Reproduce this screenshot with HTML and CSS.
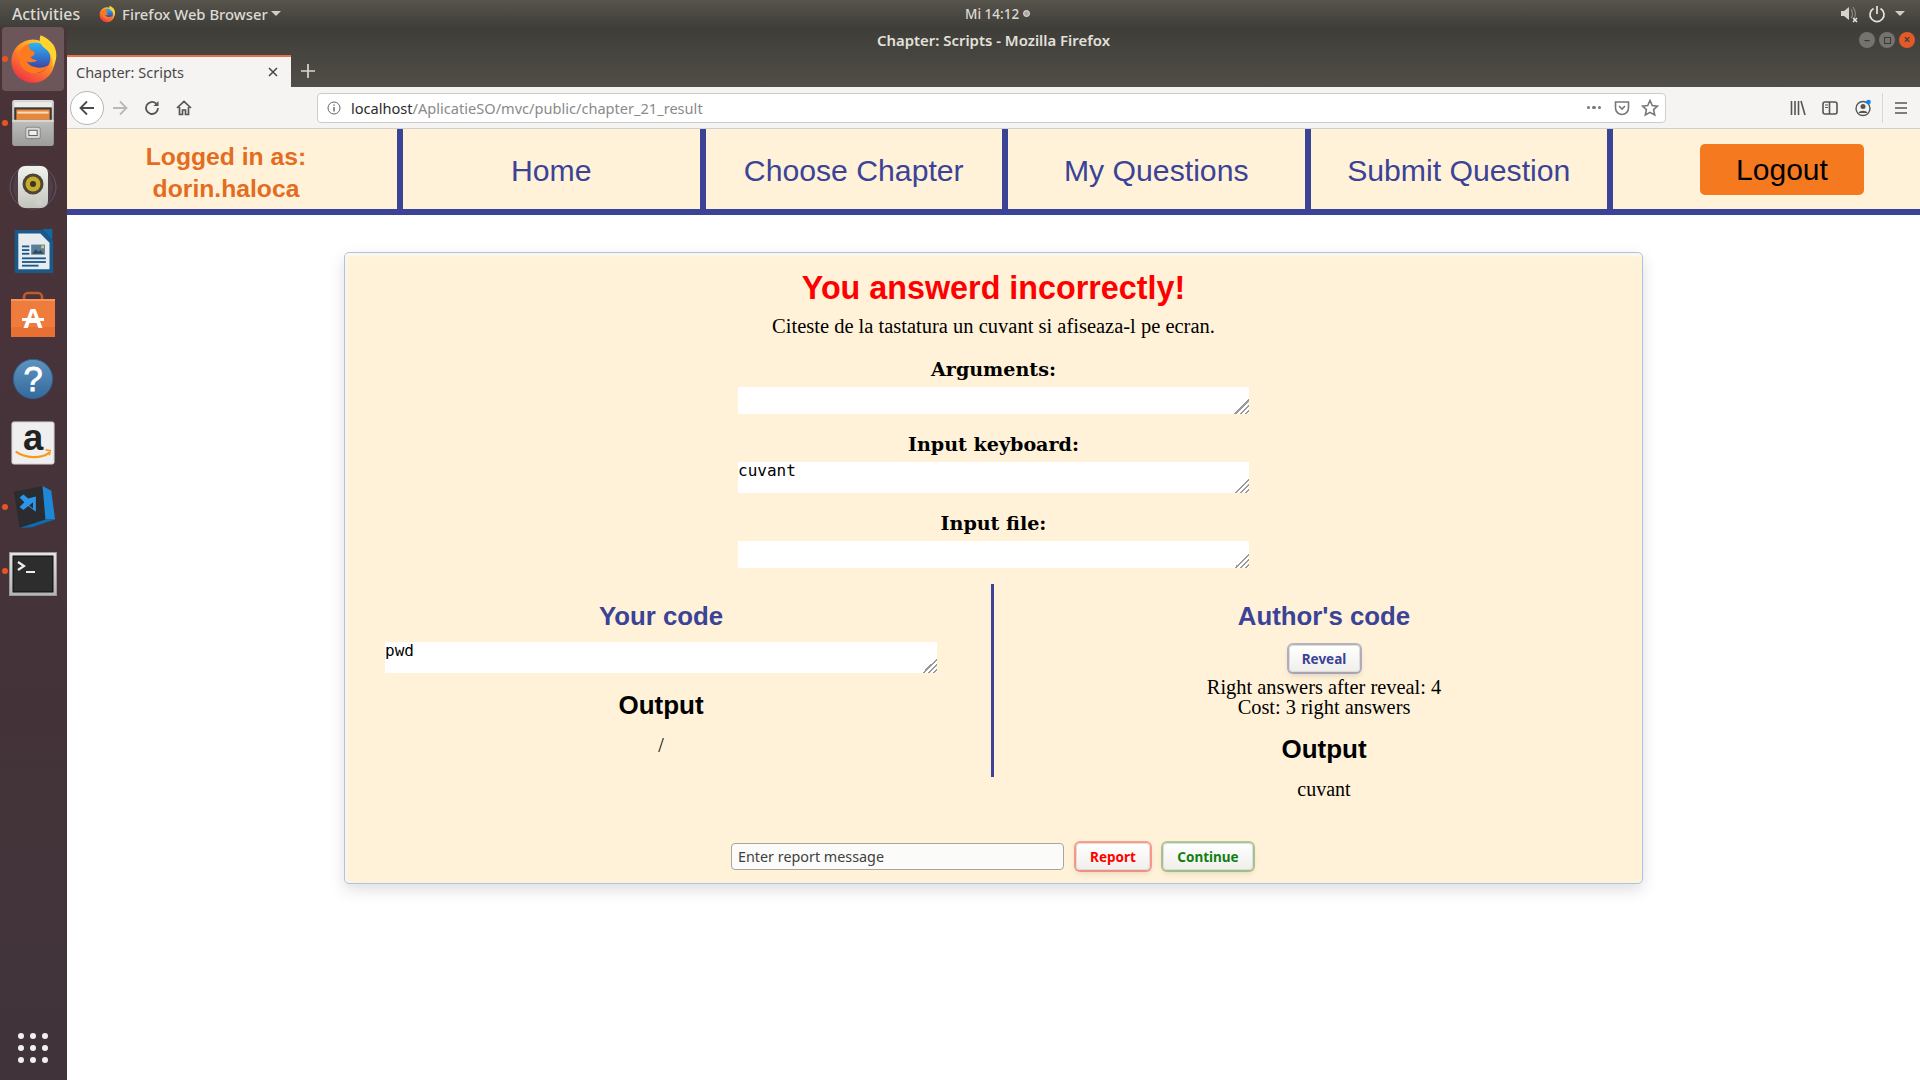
FILE: index.html
```html
<!DOCTYPE html>
<html lang="en">
<head>
  <meta charset="UTF-8">
  <title>Chapter: Scripts</title>
  <link rel="stylesheet" href="styles.css">
</head>
<body>
  <!-- ubuntu top bar -->
  <div class="topbar">
    <div class="topbar-left">
      <span class="top-activities">Activities</span>
      <svg class="top-ff" viewBox="0 0 48 48" width="18" height="18"><use href="#firefox"/></svg>
      <span>Firefox Web Browser</span>
      <span class="caret"></span>
    </div>
    <div class="top-clock">Mi 14:12 <span class="clock-dot"></span></div>
    <div class="topbar-right">
      <svg width="20" height="20" viewBox="0 0 20 20"><path d="M2 7h3l5-4v13l-5-4H2z" fill="#d5d3ce"/><path d="M12 5c2 3 2 7 0 9M14 3c3 4 3 9 1 12" stroke="#8b8984" stroke-width="1.2" fill="none"/><path d="M14 14l4 4m0-4l-4 4" stroke="#e6e4df" stroke-width="1.6"/></svg>
      <svg width="18" height="18" viewBox="0 0 18 18"><path d="M5.5 3.5a7 7 0 1 0 7 0" stroke="#e6e4df" stroke-width="1.7" fill="none"/><path d="M9 1v8" stroke="#e6e4df" stroke-width="1.7"/></svg>
      <span class="caret"></span>
    </div>
  </div>

  <div class="desktop">
    <!-- launcher -->
    <div class="dock">
      <div class="dock-item active"><span class="run-dot"></span>
        <svg viewBox="0 0 48 48" width="52" height="52"><use href="#firefox"/></svg>
      </div>
      <div class="dock-item"><span class="run-dot"></span>
        <svg viewBox="0 0 48 48" width="50" height="50">
          <rect x="4" y="2" width="40" height="44" rx="2" fill="url(#cabinet)"/>
          <rect x="6" y="4" width="36" height="5" fill="#ececea"/>
          <rect x="6" y="9" width="36" height="12" fill="#3a3632"/>
          <rect x="8" y="11" width="32" height="10" fill="#e5873f"/>
          <rect x="9" y="13" width="30" height="2" fill="#f8dcb8"/>
          <rect x="4" y="21" width="40" height="2" fill="#d6d6d4"/>
          <rect x="17" y="28" width="14" height="11" rx="2" fill="#d8d8d6" stroke="#8a8a88"/>
          <rect x="20" y="31" width="8" height="5" fill="#f0f0ee" stroke="#666"/>
        </svg>
      </div>
      <div class="dock-item">
        <svg viewBox="0 0 48 52" width="48" height="52">
          <ellipse cx="24" cy="26" rx="23" ry="22" fill="none" stroke="#5d5a6c" stroke-width="1"/>
          <ellipse cx="24" cy="26" rx="20" ry="22" fill="#4f3f48"/>
          <rect x="9" y="5" width="30" height="42" rx="7" fill="url(#speaker)"/>
          <circle cx="24" cy="23" r="10.5" fill="#4c4632"/>
          <circle cx="24" cy="23" r="7.5" fill="#c7ab2c"/>
          <circle cx="24" cy="23" r="3" fill="#3a3628"/>
          <circle cx="30" cy="41" r="3.5" fill="#cfcfca"/>
        </svg>
      </div>
      <div class="dock-item">
        <svg viewBox="0 0 48 52" width="44" height="50">
          <path d="M4 3h30l12 12v34a1 1 0 0 1-1 1H6a2 2 0 0 1-2-2z" fill="#1a5a8a"/>
          <path d="M8 7h24l10 10v29H8z" fill="#e8ecef"/>
          <path d="M34 2h11v12z" fill="#0f6aa6"/>
          <rect x="12" y="20" width="8" height="2" fill="#1a5a8a"/><rect x="12" y="24" width="8" height="2" fill="#1a5a8a"/><rect x="12" y="28" width="8" height="2" fill="#1a5a8a"/>
          <rect x="22" y="19" width="15" height="11" fill="#5a7f9a"/>
          <path d="M23 29l4-5 3 3 2-2 4 4z" fill="#2f4a5e"/>
          <rect x="33" y="20" width="3" height="3" fill="#e8c84a"/>
          <rect x="12" y="33" width="26" height="2" fill="#1a5a8a"/><rect x="12" y="37" width="26" height="2" fill="#1a5a8a"/><rect x="12" y="41" width="18" height="2" fill="#1a5a8a"/>
        </svg>
      </div>
      <div class="dock-item">
        <svg viewBox="0 0 48 48" width="48" height="50">
          <path d="M15 10V6a4 4 0 0 1 4-4h10a4 4 0 0 1 4 4v4" stroke="#c05a30" stroke-width="2.6" fill="none"/>
          <path d="M2 8h44v38H2z" fill="#ef7c3c"/>
          <path d="M2 8h44v2H2z" fill="#f5975c"/>
          <path d="M2 36h44v10H2z" fill="#e97033"/>
          <text x="24" y="37" class="store-mark" text-anchor="middle">A</text>
          <rect x="13" y="27" width="22" height="3" fill="#fff"/>
        </svg>
      </div>
      <div class="dock-item">
        <svg viewBox="0 0 48 48" width="46" height="46">
          <circle cx="24" cy="24" r="20.5" fill="url(#helpBall)" stroke="#2c5f8e"/>
          <text x="24" y="37" class="help-mark" text-anchor="middle">?</text>
        </svg>
      </div>
      <div class="dock-item">
        <svg viewBox="0 0 48 48" width="46" height="46">
          <rect x="2" y="2" width="44" height="44" rx="2" fill="#efefef" stroke="#c9c9c9"/>
          <text x="24" y="31" class="amazon-mark" text-anchor="middle">a</text>
          <path d="M6 33c10 7 26 8 35 1" stroke="#f79a1c" stroke-width="2.4" fill="none"/>
          <path d="M37 31l5 1-1 5" stroke="#f79a1c" stroke-width="1.6" fill="none"/>
        </svg>
      </div>
      <div class="dock-item"><span class="run-dot"></span>
        <svg viewBox="0 0 48 48" width="46" height="48">
          <path d="M4 8l30-6 3 35-27 9z" fill="#2b2c30"/>
          <path d="M34 2l9 5 4 30-10 0z" fill="#1e88d8"/>
          <path d="M10 46l27-9h10l-24 8z" fill="#0f6bb0"/>
          <path d="M27 13v16l-8-6-5 4-4-3 5-5-5-5 4-3 5 4z" fill="#2b96e8"/>
          <path d="M24 19l-4 3.5 4 3z" fill="#2b2c30"/>
        </svg>
      </div>
      <div class="dock-item"><span class="run-dot"></span>
        <svg class="dock-term" viewBox="0 0 48 44" width="48" height="44">
          <rect x="0.5" y="0.5" width="47" height="43" fill="url(#termFrame)" stroke="#9a9a98"/>
          <rect x="4" y="4" width="40" height="36" fill="#2d2d2d" stroke="#0c0c0c"/>
          <path d="M9 10l6 4-6 4" stroke="#eee" stroke-width="2.2" fill="none"/>
          <rect x="17" y="19" width="9" height="2" fill="#eee"/>
        </svg>
      </div>
      <div class="dock-grid">
        <span></span><span></span><span></span><span></span><span></span><span></span><span></span><span></span><span></span>
      </div>
    </div>

    <div class="window">
      <div class="titlebar">
        <span class="title-text">Chapter: Scripts - Mozilla Firefox</span>
        <div class="win-buttons">
          <span class="win-btn">&#8211;</span>
          <span class="win-btn"><i class="win-max"></i></span>
          <span class="win-btn close">&#215;</span>
        </div>
      </div>
      <div class="tabstrip">
        <div class="tab">
          <span>Chapter: Scripts</span>
          <svg width="12" height="12" viewBox="0 0 12 12"><path d="M2 2l8 8m0-8l-8 8" stroke="#444" stroke-width="1.5"/></svg>
        </div>
        <svg class="newtab" width="16" height="16" viewBox="0 0 16 16"><path d="M8 1v14M1 8h14" stroke="#d8d6d1" stroke-width="1.7"/></svg>
      </div>
      <div class="toolbar">
        <div class="back-btn">
          <svg width="18" height="18" viewBox="0 0 18 18"><path d="M16 9H2.5M9 2.5L2.5 9 9 15.5" stroke="#4a4a4a" stroke-width="1.8" fill="none"/></svg>
        </div>
        <svg class="tool-forward" width="18" height="18" viewBox="0 0 18 18"><path d="M2 9h13.5M9 2.5L15.5 9 9 15.5" stroke="#b8b8b8" stroke-width="1.8" fill="none"/></svg>
        <svg class="tool-reload" width="16" height="16" viewBox="0 0 16 16"><path d="M14 8a6 6 0 1 1-2-4.5" stroke="#555" stroke-width="1.8" fill="none"/><path d="M14.5 1v5h-5z" fill="#555"/></svg>
        <svg class="tool-home" width="16" height="16" viewBox="0 0 16 16"><path d="M1 8l7-6.5L15 8M3.5 7v7.5h3V10h3v4.5h3V7" stroke="#555" stroke-width="1.7" fill="none"/></svg>
        <div class="urlbar">
          <svg width="14" height="14" viewBox="0 0 14 14"><circle cx="7" cy="7" r="6" stroke="#666" fill="none"/><path d="M7 6v4.5M7 3.4v1.4" stroke="#666" stroke-width="1.4"/></svg>
          <span class="url"><b>localhost</b>/AplicatieSO/mvc/public/chapter_21_result</span>
          <span class="url-dots"><i></i><i></i><i></i></span>
          <svg width="16" height="16" viewBox="0 0 16 16"><path d="M1.5 2h13v6a6.5 6.5 0 0 1-13 0z" stroke="#777" stroke-width="1.6" fill="none"/><path d="M5 6l3 3 3-3" stroke="#777" stroke-width="1.6" fill="none"/></svg>
          <svg width="18" height="18" viewBox="0 0 18 18"><path d="M9 1.5l2.3 5 5.2.6-3.9 3.5 1.1 5.4L9 13.3l-4.7 2.7 1.1-5.4L1.5 7.1l5.2-.6z" stroke="#777" stroke-width="1.6" fill="none"/></svg>
        </div>
        <div class="tool-right">
          <svg width="16" height="16" viewBox="0 0 16 16"><path d="M1.5 1v14M5 1v14M8.5 1v14M11 1l4 14" stroke="#555" stroke-width="1.6" fill="none"/></svg>
          <svg width="16" height="16" viewBox="0 0 16 16"><rect x="1" y="2" width="14" height="12" rx="2" stroke="#555" stroke-width="1.6" fill="none"/><path d="M7.5 2v12" stroke="#555" stroke-width="1.6"/><path d="M3 5h3M3 7.5h3" stroke="#555"/></svg>
          <svg width="18" height="18" viewBox="0 0 18 18"><circle cx="9" cy="9.5" r="7" stroke="#555" stroke-width="1.4" fill="none"/><circle cx="9" cy="7.5" r="2.5" fill="#555"/><path d="M4.5 14c1-3 8-3 9 0z" fill="#555"/><circle cx="14.5" cy="3" r="2.3" fill="#0a84ff"/></svg>
          <span class="tool-sep"></span>
          <svg width="14" height="14" viewBox="0 0 14 14"><path d="M1 2h12M1 7h12M1 12h12" stroke="#555" stroke-width="1.7"/></svg>
        </div>
      </div>

      <!-- the page itself -->
      <div class="page">
        <nav class="nav">
          <div class="nav-user">Logged in as:<br>dorin.haloca</div>
          <a class="nav-link">Home</a>
          <a class="nav-link">Choose Chapter</a>
          <a class="nav-link">My Questions</a>
          <a class="nav-link">Submit Question</a>
          <div class="nav-logout"><button class="logout-btn">Logout</button></div>
        </nav>

        <div class="card">
          <h1 class="result-title">You answerd incorrectly!</h1>
          <p class="task-text">Citeste de la tastatura un cuvant si afiseaza-l pe ecran.</p>

          <label class="field-label first">Arguments:</label>
          <textarea class="field field-short"></textarea>
          <label class="field-label">Input keyboard:</label>
          <textarea class="field field-tall">cuvant</textarea>
          <label class="field-label">Input file:</label>
          <textarea class="field field-short"></textarea>

          <div class="code-row">
            <div class="code-col left">
              <h2 class="code-title">Your code</h2>
              <textarea class="code-area">pwd</textarea>
              <h2 class="output-title">Output</h2>
              <p class="output-text">/</p>
            </div>
            <div class="code-col right">
              <h2 class="code-title">Author's code</h2>
              <button class="btn btn-reveal">Reveal</button>
              <p class="reveal-info">Right answers after reveal: 4<br>Cost: 3 right answers</p>
              <h2 class="output-title">Output</h2>
              <p class="output-text">cuvant</p>
            </div>
          </div>

          <div class="report-row">
            <input class="report-input" placeholder="Enter report message">
            <button class="btn btn-report">Report</button>
            <button class="btn btn-continue">Continue</button>
          </div>
        </div>
      </div>
    </div>
  </div>

  <!-- shared gradients and the firefox logo -->
  <svg class="defs" width="0" height="0">
    <defs>
      <linearGradient id="ffOuter" x1="0.8" y1="0" x2="0.2" y2="1">
        <stop offset="0" stop-color="#ffd83a"/><stop offset="0.45" stop-color="#ff8a24"/><stop offset="1" stop-color="#ee2a4a"/>
      </linearGradient>
      <linearGradient id="ffGlobe" x1="0.5" y1="0" x2="0.5" y2="1">
        <stop offset="0" stop-color="#2fb4f5"/><stop offset="1" stop-color="#3b2f9e"/>
      </linearGradient>
      <linearGradient id="cabinet" x1="0" y1="0" x2="0" y2="1">
        <stop offset="0" stop-color="#d8d8d6"/><stop offset="1" stop-color="#9c9c9a"/>
      </linearGradient>
      <linearGradient id="speaker" x1="0" y1="0" x2="0" y2="1">
        <stop offset="0" stop-color="#f2f2ee"/><stop offset="1" stop-color="#c4c4be"/>
      </linearGradient>
      <linearGradient id="helpBall" x1="0" y1="0" x2="0" y2="1">
        <stop offset="0" stop-color="#5f93c0"/><stop offset="1" stop-color="#346a9c"/>
      </linearGradient>
      <linearGradient id="termFrame" x1="0" y1="0" x2="0" y2="1">
        <stop offset="0" stop-color="#e4e4e2"/><stop offset="1" stop-color="#b4b4b2"/>
      </linearGradient>
      <symbol id="firefox" viewBox="0 0 48 48">
        <circle cx="24" cy="26" r="20" fill="url(#ffOuter)"/>
        <circle cx="26" cy="23" r="14" fill="url(#ffGlobe)"/>
        <path d="M31 2c-2 5 0 9 5 13 5 4 7 10 6 17 4-6 5-14 1-21-3-4-7-7-12-9z" fill="#ffd42e"/>
        <path d="M20 10c-6 2-9 7-9 13 0 8 7 15 16 14 6-1 10-4 12-8-4 3-10 4-15 2-3-1-5-3-6-5 4 2 8 1 10-1-3 0-6-1-6-3 3-1 4-3 3-5-3 0-5-3-5-7z" fill="#ff7a1f"/>
      </symbol>
    </defs>
  </svg>
</body>
</html>
```

FILE: styles.css
```css
* {
  box-sizing: border-box;
}

html, body {
  height: 100%;
}

body {
  margin: 0;
  overflow: hidden;
  display: flex;
  flex-direction: column;
  background: #fff;
  font-family: 'Liberation Sans', Arial, sans-serif;
}

.defs {
  position: absolute;
}

/* top bar */
.topbar {
  height: 27px;
  flex: none;
  display: grid;
  grid-template-columns: 965px auto 1fr;
  align-items: center;
  background: linear-gradient(#57544c, #403e39);
  color: #dcdad5;
  font-family: 'Noto Sans', sans-serif;
  font-size: 13.5px;
  font-weight: 500;
}

.topbar-left {
  display: flex;
  align-items: center;
  padding-left: 12px;
  font-size: 14.8px;
}

.top-activities {
  margin-right: 18px;
  font-size: 15.8px;
}

.top-ff {
  margin-right: 6px;
}

.caret {
  display: inline-block;
  width: 0;
  height: 0;
  margin-left: 3px;
  border: 5px solid transparent;
  border-top: 5px solid #cfcdc8;
  border-bottom: 0;
}

.top-clock {
  display: flex;
  align-items: center;
  gap: 4px;
}

.clock-dot {
  width: 7px;
  height: 7px;
  border: 1px solid #e6e4df;
  border-radius: 50%;
  background: #aaa;
}

.topbar-right {
  display: flex;
  align-items: center;
  justify-content: flex-end;
  gap: 9px;
  padding-right: 15px;
}

.topbar-right .caret {
  margin-left: 0;
}

.desktop {
  flex: 1;
  display: flex;
  min-height: 0;
}

/* launcher */
.dock {
  width: 67px;
  flex: none;
  display: flex;
  flex-direction: column;
  background: linear-gradient(#4a3339, #40343a);
}

.dock-item {
  position: relative;
  width: 62px;
  height: 64px;
  margin-left: 2px;
  flex: none;
  display: flex;
  align-items: center;
  justify-content: center;
  border-radius: 4px;
}

.dock-item svg {
  overflow: visible;
}

.dock-item.active {
  background: #6d5659;
}

.dock-term {
  margin-top: 5px;
}

.run-dot {
  position: absolute;
  left: 0;
  top: 29px;
  width: 6px;
  height: 6px;
  border-radius: 50%;
  background: #e95420;
}

.store-mark {
  font-family: 'Liberation Sans', sans-serif;
  font-size: 28px;
  font-weight: bold;
  fill: #fff;
}

.help-mark {
  font-family: 'Liberation Sans', sans-serif;
  font-size: 36px;
  fill: #fff;
  stroke: #fff;
  stroke-width: 0.8px;
}

.amazon-mark {
  font-family: 'Liberation Sans', sans-serif;
  font-size: 38px;
  font-weight: bold;
  fill: #222;
}

.dock-grid {
  margin: auto 0 17px 18px;
  width: 30px;
  display: grid;
  grid-template-columns: repeat(3, 6px);
  gap: 6px;
}

.dock-grid span {
  height: 6px;
  border-radius: 50%;
  background: #f2f0ee;
}

/* browser chrome */
.window {
  flex: 1;
  min-width: 0;
  display: flex;
  flex-direction: column;
}

.titlebar {
  position: relative;
  height: 28px;
  flex: none;
  display: flex;
  align-items: center;
  justify-content: center;
  padding-bottom: 2px;
  background: linear-gradient(#3f3d38, #47453f);
  color: #e2e0db;
  font-family: 'Noto Sans', sans-serif;
  font-size: 14.9px;
  font-weight: 600;
}

.win-buttons {
  position: absolute;
  right: 5px;
  top: 5px;
  display: flex;
  gap: 4px;
}

.win-btn {
  width: 16px;
  height: 16px;
  display: flex;
  align-items: center;
  justify-content: center;
  border-radius: 50%;
  background: #75736d;
  color: #3b3a36;
  font-size: 12px;
  line-height: 1;
}

.win-btn.close {
  background: #e25a2a;
}

.win-max {
  width: 7px;
  height: 7px;
  border: 1px solid #3b3a36;
}

.tabstrip {
  height: 32px;
  flex: none;
  display: flex;
  align-items: center;
  background: linear-gradient(#47453f, #514e47);
}

.tab {
  width: 224px;
  height: 32px;
  display: flex;
  align-items: center;
  justify-content: space-between;
  padding: 0 12px 1px 9px;
  border-top: 2px solid #e9704a;
  background: #f5f4f2;
  color: #4a4a4a;
  font-family: 'Noto Sans', sans-serif;
  font-size: 14.5px;
}

.newtab {
  margin-left: 9px;
}

.toolbar {
  height: 42px;
  flex: none;
  display: flex;
  align-items: center;
  padding-left: 3px;
  background: #f5f4f2;
  border-bottom: 1px solid #cfcfcd;
}

.back-btn {
  width: 34px;
  height: 34px;
  display: flex;
  align-items: center;
  justify-content: center;
  border: 1px solid #b5b5b5;
  border-radius: 50%;
  background: #fff;
}

.tool-forward {
  margin-left: 7px;
}

.tool-reload {
  margin-left: 15px;
}

.tool-home {
  margin-left: 16px;
}

.urlbar {
  width: 1349px;
  height: 30px;
  margin-left: 125px;
  display: flex;
  align-items: center;
  gap: 11px;
  padding: 0 6px 0 9px;
  border: 1px solid #cdcdcb;
  border-radius: 4px;
  background: #fff;
  font-family: 'Noto Sans', sans-serif;
  font-size: 14.58px;
}

.url {
  flex: 1;
  margin-left: -1px;
  color: #8a8a8a;
}

.url b {
  color: #2b2b2b;
  font-weight: 400;
}

.url-dots {
  display: flex;
  gap: 2px;
  margin-right: 2px;
}

.url-dots i {
  width: 3.5px;
  height: 3.5px;
  border-radius: 50%;
  background: #777;
}

.tool-right {
  flex: 1;
  display: flex;
  align-items: center;
  gap: 16px;
  padding-left: 124px;
}

.tool-sep {
  width: 1px;
  height: 30px;
  margin: 0 -5px 0 -6px;
  background: #d8d8d6;
}

/* page */
.page {
  flex: 1;
  min-height: 0;
  background: #fff;
}

.nav {
  height: 86px;
  display: grid;
  grid-template-columns: 336px repeat(4, 302.5px) 1fr;
  border-bottom: 6px solid #3a4396;
  background: #fff2d9;
}

.nav-user {
  display: flex;
  align-items: center;
  justify-content: center;
  padding: 8px 12px 0 0;
  text-align: center;
  border-right: 6px solid #3a4396;
  color: #e46c1f;
  font-size: 24.7px;
  font-weight: bold;
  line-height: 32px;
}

.nav-link {
  display: flex;
  align-items: center;
  justify-content: center;
  padding-top: 3px;
  border-right: 6px solid #3a4396;
  color: #3a4396;
  font-size: 30.2px;
}

.nav-logout {
  display: flex;
  justify-content: center;
  padding: 15px 0 0 31px;
}

.logout-btn {
  width: 164px;
  height: 51px;
  border: 0;
  border-radius: 5px;
  background: #f5791e;
  color: #000;
  font-family: 'Liberation Sans', sans-serif;
  font-size: 30px;
}

.card {
  width: 1299px;
  height: 632px;
  margin: 37px 0 0 277px;
  padding-top: 17px;
  border: 1px solid #a9c3ee;
  border-radius: 5px;
  background: #fff2d9;
  box-shadow: inset 0 5px 3px -2px rgba(255, 255, 255, 0.45), inset 4px 0 3px -2px rgba(255, 255, 255, 0.35), 0 6px 16px rgba(0, 0, 0, 0.13);
  text-align: center;
}

.result-title {
  margin: 0;
  color: #ff0000;
  font-size: 32.3px;
  line-height: 37px;
}

.task-text {
  margin: 8px 0 0;
  color: #000;
  font-family: 'Liberation Serif', serif;
  font-size: 20.5px;
  line-height: 23px;
}

.field-label {
  display: block;
  margin-top: 19px;
  color: #000;
  font-family: 'DejaVu Serif', serif;
  font-size: 19.1px;
  font-weight: bold;
  line-height: 24px;
}

.field-label.first {
  margin-top: 20px;
}

.field, .code-area {
  display: block;
  padding: 0;
  border: 0;
  outline: 0;
  background: #fff;
  color: #000;
  font-family: 'DejaVu Sans Mono', monospace;
  font-size: 16px;
  line-height: 17px;
}

/* bigger diagonal grip than the default one */
.field::-webkit-resizer, .code-area::-webkit-resizer {
  background: linear-gradient(135deg, transparent 50%, #999 50% 57%, #fff 57% 68%, #999 68% 75%, #fff 75% 86%, #999 86% 93%, transparent 93%);
}

.field {
  width: 511px;
  margin: 5px auto 0;
}

.field-short {
  height: 27px;
}

.field-tall {
  height: 31px;
}

.code-row {
  display: flex;
  align-items: flex-start;
  margin-top: 16px;
}

.code-col.left {
  width: 649px;
  height: 193px;
  padding: 17px 54px 0 40px;
  border-right: 3px solid #3a4396;
}

.code-col.right {
  flex: 1;
  padding: 17px 0 0 12px;
}

.code-title {
  margin: 0;
  color: #3a4396;
  font-size: 25.8px;
  line-height: 30px;
}

.code-area {
  width: 552px;
  height: 31px;
  margin-top: 11px;
}

.output-title {
  margin: 17px 0 0;
  color: #000;
  font-size: 26px;
  line-height: 30px;
}

.output-text {
  margin: 14px 0 0;
  color: #000;
  font-family: 'Liberation Serif', serif;
  font-size: 20px;
  line-height: 23px;
}

.btn {
  height: 27px;
  padding: 0;
  border: 1px solid #ddd;
  border-radius: 4px;
  background: linear-gradient(#fff, #f0efec);
  font-family: 'Noto Sans', sans-serif;
  font-size: 13.5px;
  font-weight: 700;
}

.btn-reveal {
  display: block;
  width: 71px;
  margin: 14px auto 0;
  color: #3a4396;
  box-shadow: 0 0 0 2px rgba(58, 67, 150, 0.35), 0 3px 6px rgba(0, 0, 0, 0.15);
}

.reveal-info {
  margin: 6px 0 0;
  color: #000;
  font-family: 'Liberation Serif', serif;
  font-size: 20.4px;
  line-height: 19.5px;
}

.right .output-title {
  margin-top: 17px;
}

.report-row {
  display: flex;
  justify-content: center;
  gap: 11px;
  margin-top: 42px;
  padding-right: 3px;
}

.report-input {
  width: 333px;
  height: 27px;
  margin-right: 1px;
  padding: 0 6px;
  border: 1px solid #a5a5a3;
  border-radius: 4px;
  outline: 0;
  background: #fbfbfa;
  font-family: 'Noto Sans', sans-serif;
  font-size: 14.35px;
}

.report-input::placeholder {
  color: #3f3f3f;
  opacity: 1;
}

.btn-report {
  width: 74px;
  color: #ff0000;
  box-shadow: 0 0 0 2px rgba(255, 0, 0, 0.35), 0 3px 6px rgba(0, 0, 0, 0.12);
}

.btn-continue {
  width: 90px;
  margin-left: 2px;
  color: #108010;
  box-shadow: 0 0 0 2px rgba(16, 128, 16, 0.35), 0 3px 6px rgba(0, 0, 0, 0.12);
}
```
